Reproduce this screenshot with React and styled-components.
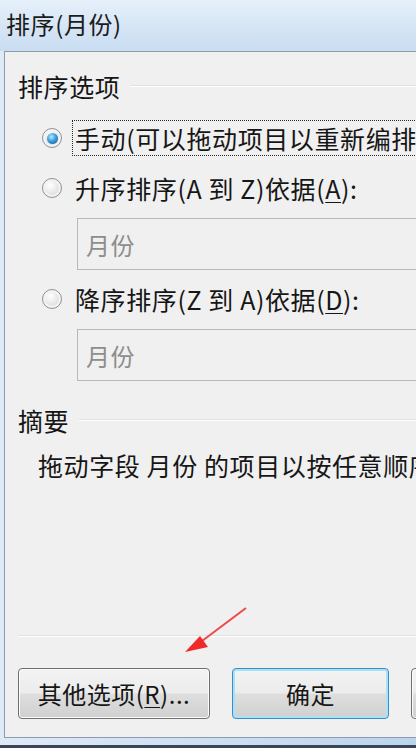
import React from "react";
import styled, { createGlobalStyle } from "styled-components";

const Global = createGlobalStyle`
  html, body {
    margin: 0;
    padding: 0;
    overflow: hidden;
  }
  body {
    font-family: "Noto Sans CJK SC", "Noto Sans", sans-serif;
  }
`;

const Window = styled.div`
  width: 416px;
  height: 748px;
  overflow: hidden;
  position: relative;
  display: flex;
  flex-direction: column;
  background: linear-gradient(90deg, #dfeaf7 0%, #cfe0f3 45%, #bcd4ee 100%);
  border-bottom: 3px solid #3a4656;
  box-sizing: border-box;
`;

const TitleBar = styled.div`
  height: 51px;
  flex: none;
  display: flex;
  align-items: center;
  padding: 0 0 4px 6px;
  box-sizing: border-box;
  font-size: 24px;
  color: #1b1b1b;
  letter-spacing: 0.6px;
  background: linear-gradient(180deg, #e6f0fa 0%, #d4e4f5 60%, #c9dcf1 100%);
`;

const Client = styled.div`
  flex: 1;
  margin: 0 0 7px 4px;
  width: 620px;
  background: #f0f0f0;
  border: 1px solid #8c9bad;
  border-right: none;
  display: flex;
  flex-direction: column;
  color: #161616;
  font-size: 25px;
  letter-spacing: 0.6px;
`;

const GroupHeader = styled.div`
  display: flex;
  align-items: center;
  height: 30px;
  margin-top: ${(p) => p.$top}px;
  padding-left: 13px;
  gap: 10px;
  &::after {
    content: "";
    flex: 1;
    height: 1px;
    background: #dcdfe3;
    border-bottom: 1px solid #ffffff;
  }
`;

const RadioRow = styled.label`
  display: flex;
  align-items: center;
  height: 36px;
  margin-top: ${(p) => p.$top}px;
  padding-left: 37px;
  gap: 10px;
`;

const RadioDot = styled.span`
  width: 20px;
  height: 20px;
  flex: none;
  border-radius: 50%;
  box-sizing: border-box;
  border: 1px solid #929497;
  box-shadow: inset 0 0 0 2px #f4f4f4;
  background: radial-gradient(circle at 40% 35%, #ffffff 0%, #e2e2e2 60%, #c2c4c6 100%);
  display: flex;
  align-items: center;
  justify-content: center;
  &::after {
    content: "";
    display: ${(p) => (p.$checked ? "block" : "none")};
    width: 11px;
    height: 11px;
    border-radius: 50%;
    background: radial-gradient(circle at 40% 35%, #b8ecff 0%, #3a9de0 45%, #154f8f 100%);
  }
`;

const RadioText = styled.span`
  white-space: nowrap;
  line-height: 34px;
  padding: 0 2px;
  border: 1px dotted ${(p) => (p.$focus ? "#2a2a2a" : "transparent")};
`;

const Key = styled.span`
  text-decoration: underline;
  text-underline-offset: 3px;
  text-decoration-thickness: 1px;
`;

const Field = styled.div`
  margin: ${(p) => p.$top}px 0 0 72px;
  height: 52px;
  box-sizing: border-box;
  border: 1px solid #b5b7ba;
  display: flex;
  align-items: center;
  padding-left: 8px;
  color: #8d8d8d;
  font-size: 24px;
`;

const Summary = styled.div`
  margin: 15px 0 0 33px;
  height: 30px;
  line-height: 30px;
  white-space: nowrap;
`;

const Footer = styled.div`
  margin-top: auto;
  padding: 0 0 18px 13px;
  display: flex;
  flex-direction: column;
`;

const Separator = styled.div`
  height: 1px;
  background: #dde1e6;
  border-bottom: 1px solid #ffffff;
  margin-bottom: 31px;
`;

const ButtonRow = styled.div`
  display: flex;
  gap: 22px;
`;

const Button = styled.button`
  width: ${(p) => p.$w}px;
  height: 51px;
  flex: none;
  border-radius: 4px;
  border: 1px solid ${(p) => (p.$default ? "#3d8dc4" : "#707070")};
  box-shadow: ${(p) =>
    p.$default ? "inset 0 0 0 2px #a9e2f8" : "inset 0 0 0 1px #fbfbfb"};
  background: linear-gradient(180deg, #f3f3f3 0%, #ececec 48%, #dedede 52%, #d0d0d0 100%);
  font-family: "Noto Sans CJK SC", "Noto Sans", sans-serif;
  font-size: 24px;
  letter-spacing: 0.5px;
  color: #161616;
  padding: 0;
`;

const Arrow = styled.svg`
  position: absolute;
  left: 178px;
  top: 600px;
`;

export default function App() {
  return (
    <Window>
      <Global />
      <TitleBar>排序(月份)</TitleBar>
      <Client>
        <GroupHeader $top={19}>排序选项</GroupHeader>
        <RadioRow $top={19}>
          <RadioDot $checked />
          <RadioText $focus>手动(可以拖动项目以重新编排)</RadioText>
        </RadioRow>
        <RadioRow $top={14}>
          <RadioDot />
          <RadioText>
            升序排序(A 到 Z)依据(<Key>A</Key>):
          </RadioText>
        </RadioRow>
        <Field $top={12}>月份</Field>
        <RadioRow $top={11}>
          <RadioDot />
          <RadioText>
            降序排序(Z 到 A)依据(<Key>D</Key>):
          </RadioText>
        </RadioRow>
        <Field $top={12}>月份</Field>
        <GroupHeader $top={24}>摘要</GroupHeader>
        <Summary>拖动字段 月份 的项目以按任意顺序</Summary>
        <Footer>
          <Separator />
          <ButtonRow>
            <Button $w={192}>
              其他选项(<Key>R</Key>)...
            </Button>
            <Button $w={157} $default>
              确定
            </Button>
            <Button $w={157}>取消</Button>
          </ButtonRow>
        </Footer>
      </Client>
      <Arrow width="80" height="60" viewBox="0 0 80 60">
        <line x1="68" y1="8" x2="20" y2="44" stroke="#f04848" strokeWidth="2" />
        <polygon points="7,52 22,36 30,47" fill="#f02a2a" />
      </Arrow>
    </Window>
  );
}
